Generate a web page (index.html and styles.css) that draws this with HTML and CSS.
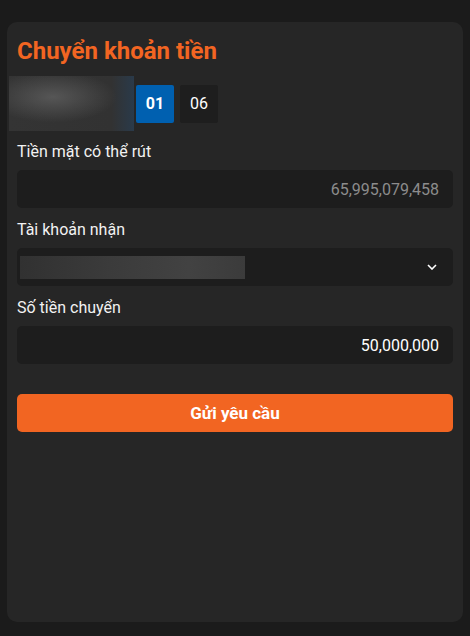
FILE: index.html
```html
<!DOCTYPE html>
<html>
<head>
    <meta charset="utf-8">
    <title>Chuyển khoản tiền</title>
    <link rel="stylesheet" href="styles.css">
</head>
<body>
    <div class="card">
        <h2 class="title">Chuyển khoản tiền</h2>

        <div class="accounts">
            <div class="avatar"></div>
            <button class="tab active">01</button>
            <button class="tab">06</button>
        </div>

        <label class="label">Tiền mặt có thể rút</label>
        <input class="field muted" type="text" value="65,995,079,458" readonly>

        <label class="label">Tài khoản nhận</label>
        <div class="field select">
            <div class="masked"></div>
            <svg class="chevron" width="10" height="6" viewBox="0 0 10 6">
                <path d="M1 1l4 4 4-4" fill="none" stroke="#fff" stroke-width="1.6"/>
            </svg>
        </div>

        <label class="label">Số tiền chuyển</label>
        <input class="field" type="text" value="50,000,000">

        <button class="submit">Gửi yêu cầu</button>
    </div>
</body>
</html>
```

FILE: styles.css
```css
body {
    margin: 0;
    padding: 22px 7px 14px;
    background: #1b1b1b;
    font-family: Roboto, "Liberation Sans", sans-serif;
    color: #fff;
}
.card {
    background: #262626;
    border-radius: 10px;
    padding: 15px 10px 0;
    height: 585px;
}
.title {
    margin: 0 0 11px;
    font-size: 24px;
    line-height: 28px;
    font-weight: 700;
    color: #f26522;
}
.accounts {
    display: flex;
    align-items: center;
    gap: 6px;
    margin: 0 0 11px -8px;
}
.avatar {
    width: 125px;
    height: 55px;
    margin-right: -4px;
    background:
        radial-gradient(ellipse 60% 55% at 35% 38%, #565656, rgba(50,50,50,0) 85%),
        linear-gradient(90deg, #343434 0%, #323232 82%, #2a3a4a 100%);
}
.tab {
    width: 38px;
    height: 38px;
    border: none;
    border-radius: 2px;
    background: #1e1e1e;
    color: #fff;
    font-family: inherit;
    font-size: 16px;
    padding: 0;
}
.tab.active {
    background: #0060b0;
    font-weight: 700;
}
.label {
    display: block;
    font-size: 16px;
    line-height: 20px;
    margin-bottom: 8px;
    color: #f2f2f2;
}
.field {
    display: block;
    box-sizing: border-box;
    width: 100%;
    height: 38px;
    margin: 0 0 12px;
    padding: 0 14px;
    border: none;
    border-radius: 5px;
    background: #1d1d1d;
    color: #fff;
    font-family: inherit;
    font-size: 16px;
    text-align: right;
    outline: none;
}
.field.muted {
    color: #8c8c8c;
}
.select {
    display: flex;
    align-items: center;
    justify-content: space-between;
    padding: 0 16px 0 3px;
}
.masked {
    width: 225px;
    height: 23px;
    background: linear-gradient(90deg, #313131, #3b3b3b 40%, #424242 75%, #3b3b3b);
}
.submit {
    display: block;
    width: 100%;
    height: 38px;
    margin-top: 30px;
    border: none;
    border-radius: 5px;
    background: #f26522;
    color: #fff;
    font-family: inherit;
    font-size: 17px;
    font-weight: 700;
}
```
